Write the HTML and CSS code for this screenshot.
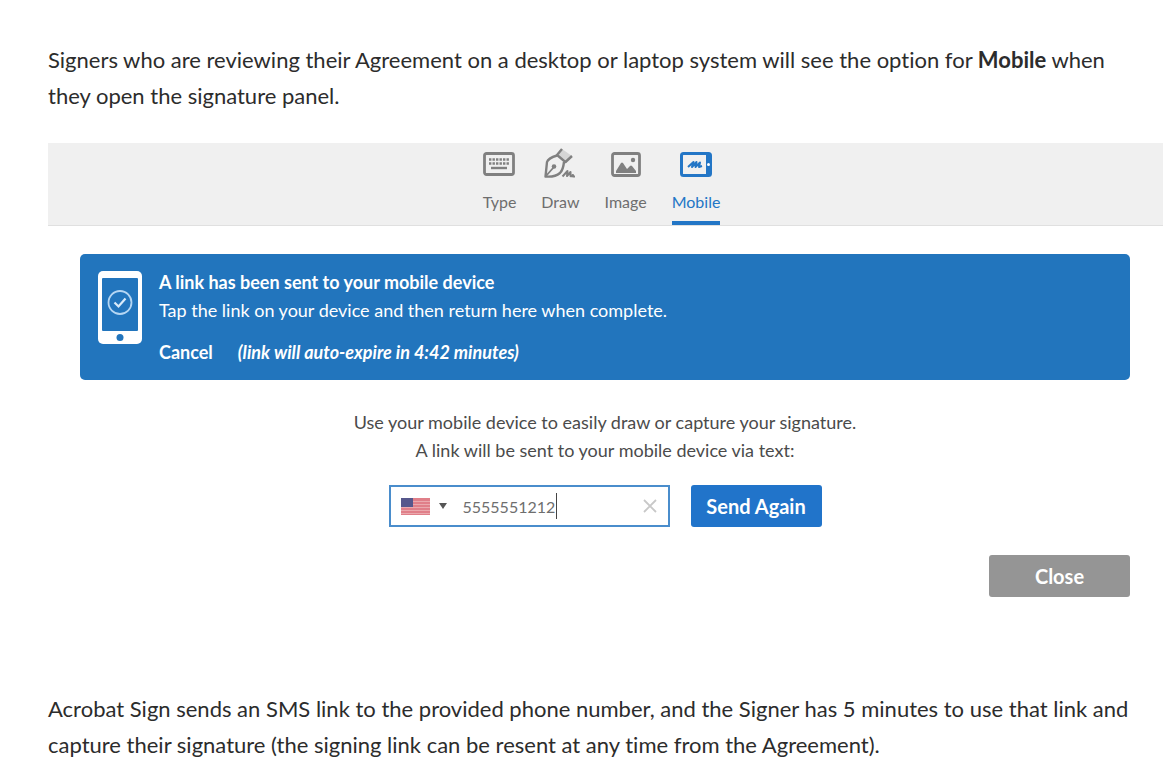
FILE: index.html
```
<!DOCTYPE html>
<html lang="en">
<head>
    <meta charset="UTF-8">
    <meta name="viewport" content="width=device-width, initial-scale=1.0">
    <title>Sign with a mobile device</title>
    <link rel="stylesheet" href="styles.css">
</head>
<body>
    <p class="copy">Signers who are reviewing their Agreement on a desktop or laptop system will see the option for <b>Mobile</b> when they open the signature panel.</p>

    <div class="panel">
        <div class="tabs" role="tablist">
            <button class="tab" role="tab">
                <svg width="32" height="32" viewBox="0 0 32 32" fill="none" stroke="#808080">
                    <rect x="1.5" y="5.5" width="29" height="21" rx="2" stroke-width="2.8"/>
                    <path d="M6 11.5h20M6 15.5h20" stroke-width="2.4" stroke-dasharray="2.4 1.1"/>
                    <path d="M8 20h16" stroke-width="2.4"/>
                </svg>
                Type
            </button>
            <button class="tab" role="tab">
                <svg width="32" height="32" viewBox="0 0 32 32" fill="none" stroke="#808080" stroke-width="2.4" stroke-linejoin="round">
                    <path d="M18 1l10 7-5 5-9-6z" fill="#d5d5d5" stroke="none"/>
                    <path d="M18 1l-5 6 8.500 7 6.500-6"/>
                    <path d="M13 7.500C8 9 4 10.500 3 14L1.500 28.500c6 .5 11-.5 14.500-3.500 2.500-2.500 3.500-6.500 4-11"/>
                    <path d="M2 28l7.500-8.500" stroke-width="1.800"/>
                    <circle cx="10" cy="18.500" r="2.300" fill="#808080" stroke="none"/>
                    <path d="M18.500 28.500l5-5.500-.5 5 3.500-4v4c1 1 1.500-.5 2.500-1v1.500h2" stroke-width="2"/>
                </svg>
                Draw
            </button>
            <button class="tab" role="tab">
                <svg width="32" height="32" viewBox="0 0 32 32">
                    <rect x="2.500" y="5.500" width="27" height="22" rx="2" fill="none" stroke="#808080" stroke-width="2.800"/>
                    <path d="M6 25v-2l5-8q1-1 2 0l4 6 3-3q1-1 2 0l4 5v2z" fill="#808080"/>
                    <circle cx="23" cy="12" r="2.200" fill="#808080"/>
                </svg>
                Image
            </button>
            <button class="tab active" role="tab" aria-selected="true">
                <svg width="32" height="32" viewBox="0 0 32 32">
                    <rect x="1.500" y="5.500" width="29" height="22" rx="2" fill="none" stroke="#2376c6" stroke-width="3"/>
                    <path d="M26 5h4v23h-4z" fill="#2376c6"/>
                    <circle cx="28.500" cy="16.500" r="1.500" fill="#fff"/>
                    <path d="M8 19l5.500-5-1.500 5 4.500-5-1 5 4.500-4.500-1 4.500 3-1" fill="none" stroke="#2376c6" stroke-width="2" stroke-linejoin="round"/>
                </svg>
                Mobile
            </button>
        </div>

        <div class="panel-body">
            <div class="notice">
                <svg width="44" height="73" viewBox="0 0 44 73">
                    <rect width="44" height="73" rx="5" fill="#fff"/>
                    <rect x="4" y="7" width="36" height="53" rx="1" fill="#2275bd"/>
                    <circle cx="22" cy="66.500" r="3.500" fill="#2275bd"/>
                    <circle cx="22" cy="31.500" r="11.500" fill="none" stroke="#b5d6f3" stroke-width="1.800"/>
                    <path d="M16.500 31.500l4 4 7-8" fill="none" stroke="#d9ebfa" stroke-width="2.200"/>
                </svg>
                <div class="notice-text">
                    <div><b>A link has been sent to your mobile device</b></div>
                    <div>Tap the link on your device and then return here when complete.</div>
                    <div class="notice-actions">
                        <button class="cancel">Cancel</button>
                        <i>(link will auto-expire in 4:42 minutes)</i>
                    </div>
                </div>
            </div>

            <label class="hint" for="phone">Use your mobile device to easily draw or capture your signature.<br>A link will be sent to your mobile device via text:</label>

            <form class="send-form">
                <div class="phone-box">
                    <div class="country">
                        <svg width="29" height="17" viewBox="0 0 29 17">
                            <rect width="29" height="17" fill="#e07f89"/>
                            <path d="M0 3.500h29M0 6.500h29M0 9.500h29M0 12.500h29M0 15.500h29" stroke="#eaa9ae"/>
                            <rect width="12" height="9" fill="#56578c"/>
                        </svg>
                        <svg width="8" height="6" viewBox="0 0 8 6"><path d="M0 0h8l-4 6z" fill="#555"/></svg>
                        <select aria-label="Country">
                            <option>US</option>
                            <option>CA</option>
                            <option>GB</option>
                        </select>
                    </div>
                    <input type="tel" id="phone" value="5555551212">
                    <button type="button" class="clear" aria-label="Clear">
                        <svg width="14" height="14" viewBox="0 0 14 14"><path d="M1 1l12 12M13 1L1 13" stroke="#c8c8c8" stroke-width="1.800"/></svg>
                    </button>
                </div>
                <button type="button" class="btn">Send Again</button>
            </form>

            <div class="footer">
                <button class="btn close">Close</button>
            </div>
        </div>
    </div>

    <p class="copy">Acrobat Sign sends an SMS link to the provided phone number, and the Signer has 5 minutes to use that link and capture their signature (the signing link can be resent at any time from the Agreement).</p>
</body>
</html>
```
FILE: styles.css
```
*{
    box-sizing: border-box;
}
body{
    margin: 0;
    padding: 42px 0 0 48px;
    background-color: #fff;
    color: #2c2c2c;
    font-family: Lato, sans-serif;
    font-variant-ligatures: none;
    overflow: hidden;
}
button, input, select{
    font-family: inherit;
    margin: 0;
}
button{
    border: none;
    cursor: pointer;
}
.copy{
    margin: 0;
    padding-right: 24px;
    font-size: 22px;
    line-height: 36px;
}
.panel{
    margin: 29px 0 94px;
    color: #4b4b4b;
    font-size: 18px;
    line-height: 28px;
}
.tabs{
    display: flex;
    justify-content: center;
    gap: 25px;
    background-color: #f0f0f0;
    border-bottom: 1px solid #e0e0e0;
    padding: 5px 8px 0 0;
}
.tab{
    display: flex;
    flex-direction: column;
    align-items: center;
    gap: 12px;
    padding: 0 0 9px;
    border-bottom: 4px solid transparent;
    background: none;
    color: #6e6e6e;
    font-size: 16px;
    line-height: 20px;
}
.tab.active{
    color: #2376c6;
    border-color: #2376c6;
}
.panel-body{
    padding: 28px 33px 0 32px;
}
.notice{
    display: flex;
    gap: 17px;
    padding: 14px 18px;
    background-color: #2275bd;
    border-radius: 5px;
    color: #fff;
}
.notice svg{
    margin-top: 3px;
}
.notice-actions{
    display: flex;
    gap: 25px;
    margin-top: 14px;
}
.notice i{
    font-weight: bold;
}
.cancel{
    padding: 0;
    background: none;
    color: #fff;
    font-size: 18px;
    font-weight: bold;
}
.hint{
    display: block;
    margin-top: 28px;
    text-align: center;
}
.send-form{
    display: flex;
    justify-content: center;
    gap: 21px;
    margin-top: 21px;
}
.phone-box{
    display: flex;
    align-items: center;
    width: 281px;
    height: 42px;
    padding: 0 11px 0 10px;
    border: 2px solid #4a8dcc;
}
.country{
    position: relative;
    display: flex;
    align-items: center;
    gap: 9px;
}
/* the select lies over the flag and arrow, its own text stays hidden */
.country select{
    position: absolute;
    inset: 0;
    width: 100%;
    appearance: none;
    border: none;
    background: none;
    color: transparent;
}
/* right border is the text cursor */
#phone{
    width: 94px;
    height: 26px;
    margin-left: 16px;
    padding: 0;
    border: none;
    border-right: 1px solid #444;
    outline: none;
    color: #6e6e6e;
    font-size: 16px;
}
.clear{
    display: flex;
    margin-left: auto;
    padding: 0;
    background: none;
}
.btn{
    width: 131px;
    height: 42px;
    padding: 0;
    border-radius: 3px;
    background-color: #2174ca;
    color: #fff;
    font-size: 20px;
    font-weight: bold;
}
.footer{
    display: flex;
    justify-content: flex-end;
    margin-top: 28px;
}
.close{
    width: 141px;
    background-color: #959595;
}
```
